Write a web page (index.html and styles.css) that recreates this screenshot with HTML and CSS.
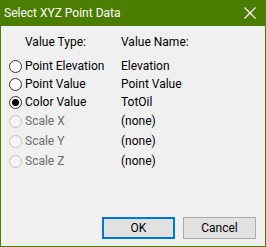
FILE: index.html
```html
<!DOCTYPE html>
<html>
<head>
<meta charset="utf-8">
<link rel="stylesheet" href="styles.css">
</head>
<body>
<div class="window">
  <div class="titlebar">
    <span class="title">Select XYZ Point Data</span>
    <svg class="close" width="12" height="12" viewBox="0 0 12 12"><path d="M0.5 0.5 L11.5 11.5 M11.5 0.5 L0.5 11.5" stroke="#fff" stroke-width="1.2" fill="none"/></svg>
  </div>
  <div class="content">
    <div class="grid">
      <div class="head h1">Value Type:</div>
      <div class="head">Value Name:</div>

      <div class="opt r18"><span class="radio"></span>Point Elevation</div>
      <div class="val r18">Elevation</div>

      <div class="opt r18"><span class="radio"></span>Point Value</div>
      <div class="val r18">Point Value</div>

      <div class="opt r18"><span class="radio checked"></span>Color Value</div>
      <div class="val r18">TotOil</div>

      <div class="opt r20 dis"><span class="radio"></span>Scale X</div>
      <div class="val r20">(none)</div>

      <div class="opt r20 dis"><span class="radio"></span>Scale Y</div>
      <div class="val r20">(none)</div>

      <div class="opt r20 dis"><span class="radio"></span>Scale Z</div>
      <div class="val r20">(none)</div>
    </div>
    <div class="buttons">
      <button class="btn default">OK</button>
      <button class="btn">Cancel</button>
    </div>
  </div>
</div>
</body>
</html>
```
FILE: styles.css
```css
html, body {
  margin: 0;
  padding: 0;
  background: #f0f0f0;
}
.window {
  width: 266px;
  height: 247px;
  box-sizing: border-box;
  border: 1px solid #4a7d00;
  border-top: none;
  background: #f0f0f0;
  display: flex;
  flex-direction: column;
  font-family: Roboto, "Liberation Sans", sans-serif;
  font-size: 12px;
  color: #000;
}
.titlebar {
  height: 26px;
  margin: 0 -1px;
  background: #4a7d00;
  color: #fff;
  display: flex;
  align-items: center;
  justify-content: space-between;
  padding: 0 10px 0 4px;
  flex: none;
}
.title {
  font-size: 12px;
  line-height: 16px;
}
.close {
  display: block;
}
.content {
  flex: 1;
  display: flex;
  flex-direction: column;
  padding: 8px 8px 7px 8px;
}
.grid {
  display: grid;
  grid-template-columns: 112px 1fr;
}
.head {
  line-height: 16px;
  height: 23px;
}
.h1 {
  padding-left: 16px;
}
.opt, .val {
  display: flex;
  align-items: center;
  white-space: nowrap;
}
.r18 { height: 18px; }
.r20 { height: 20px; }
.radio {
  width: 13px;
  height: 13px;
  box-sizing: border-box;
  border: 1px solid #333;
  border-radius: 50%;
  background: #fff;
  margin-right: 3px;
  position: relative;
  flex: none;
}
.radio.checked::after {
  content: "";
  position: absolute;
  left: 2px;
  top: 2px;
  width: 7px;
  height: 7px;
  border-radius: 50%;
  background: #000;
}
.dis {
  color: #6d6d6d;
}
.dis .radio {
  border-color: #c4c4c4;
  background: #f4f4f4;
}
.buttons {
  margin-top: auto;
  display: flex;
  justify-content: flex-end;
  gap: 8px;
  padding-right: 1px;
}
.btn {
  width: 73px;
  height: 22px;
  box-sizing: border-box;
  background: #e1e1e1;
  border: 1px solid #adadad;
  font-family: Roboto, "Liberation Sans", sans-serif;
  font-size: 12px;
  color: #000;
  padding: 0;
  margin: 0;
}
.btn.default {
  border: 2px solid #0078d7;
}
```
